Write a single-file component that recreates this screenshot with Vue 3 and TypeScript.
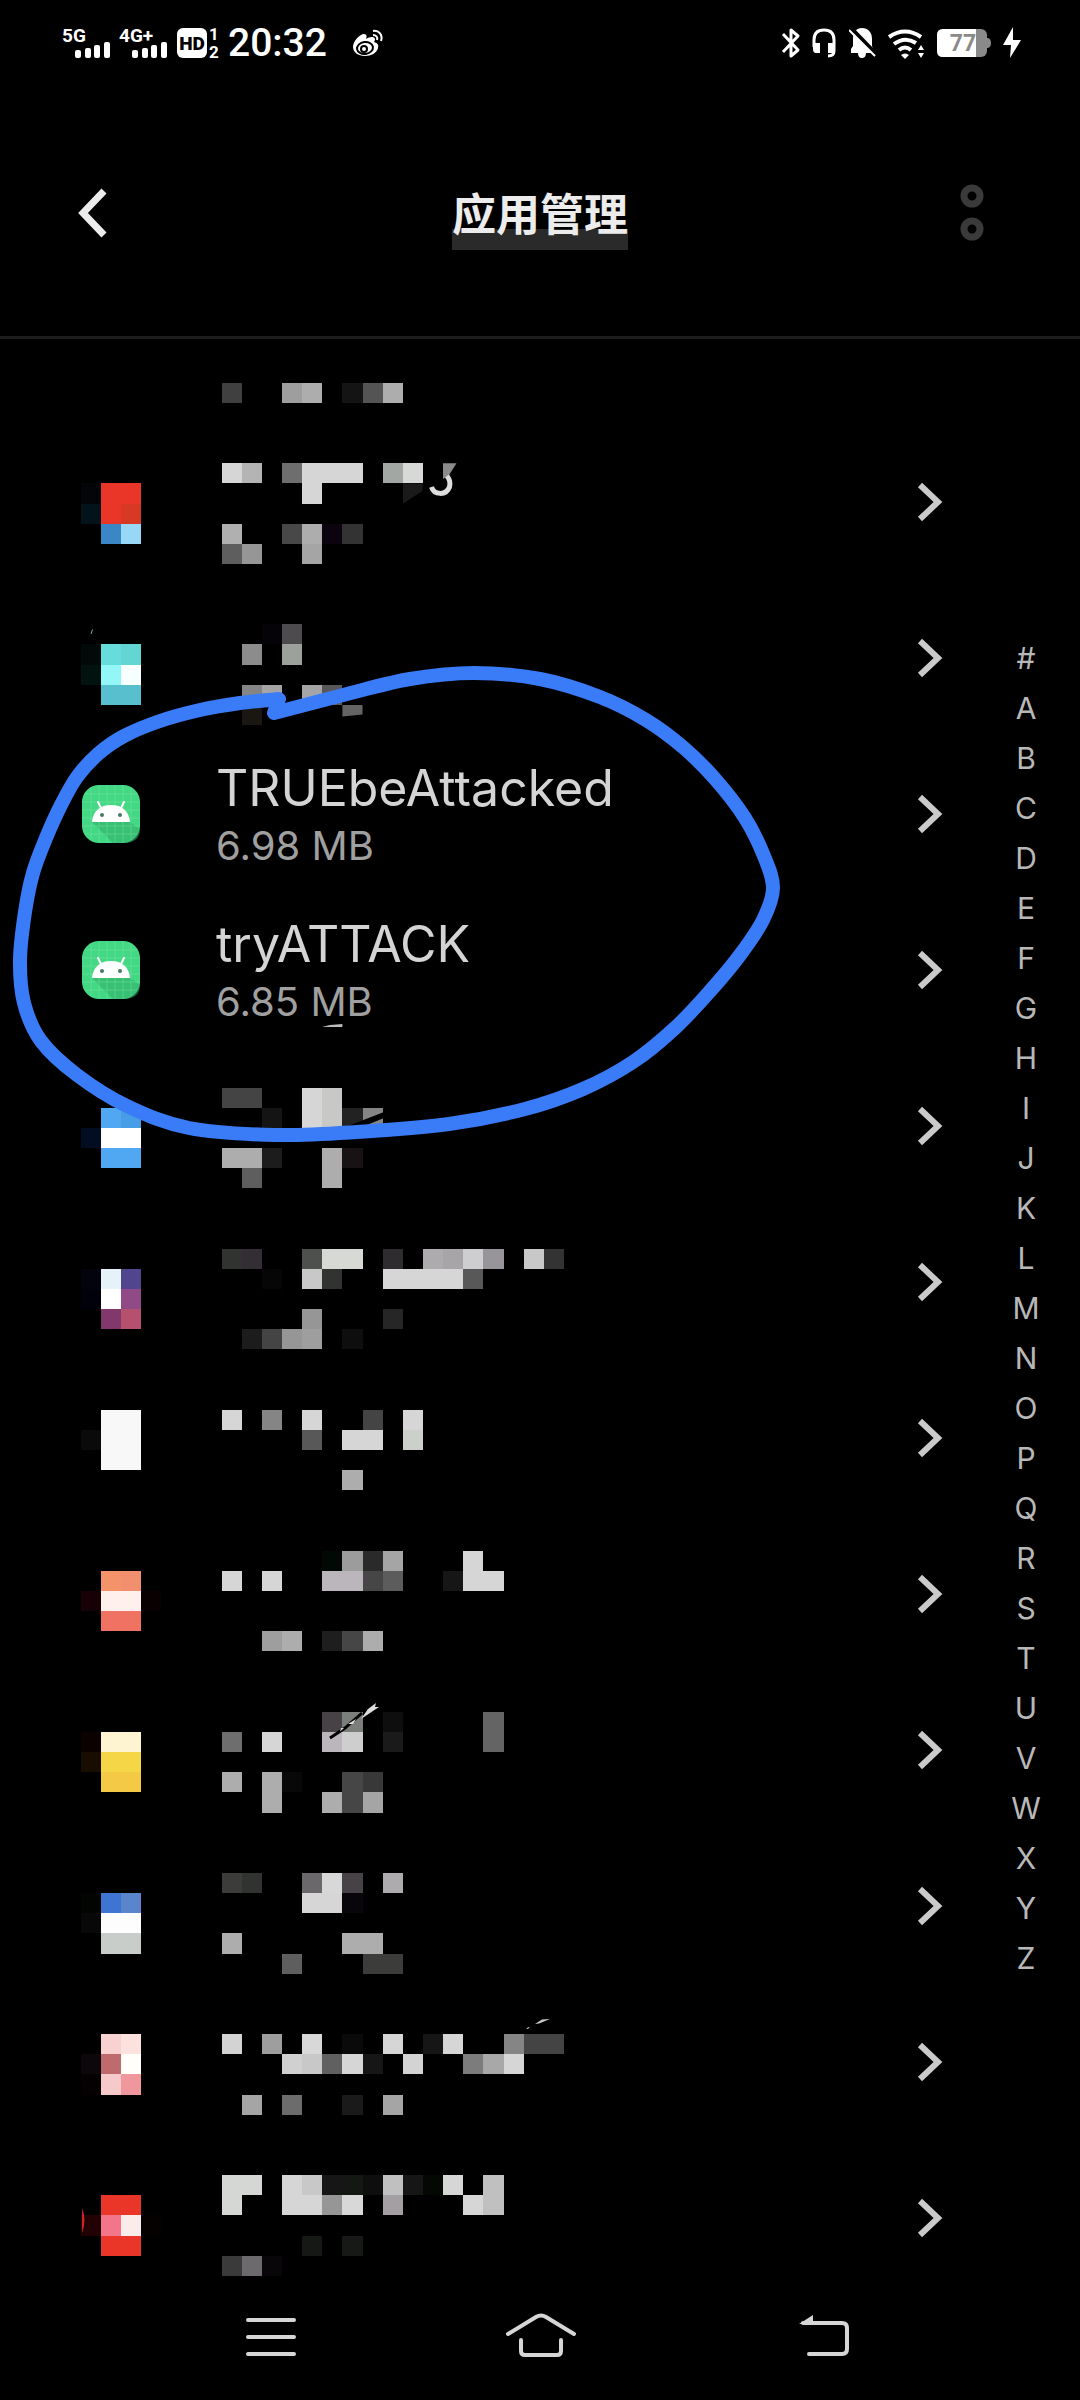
<script setup lang="ts">
type Cell = [row: number, col: number, span: number, color: string]
interface Mark { d: string; fill?: string; stroke?: string; width?: number }
interface AppRow {
  id: number
  name?: string
  size?: string
  cells?: Cell[]
  marks?: Mark[]
}

// Side of one mosaic tile, and the offsets of the list inside the screen
const TILE = 20.14
const LIST_TOP = 339
const PARTIAL = 85
const ROW = 156
const MOSAIC_LEFT = 82

const partialCells: Cell[] = [
  [19, 11, 1, '#404040'], [19, 14, 1, '#9e9e9e'], [19, 15, 1, '#adadad'],
  [19, 17, 1, '#141414'], [19, 18, 1, '#545454'], [19, 19, 1, '#adadad'],
]

const apps: AppRow[] = [
  {
    id: 0,
    cells: [
      [24, 4, 1, '#030508'], [24, 5, 2, '#ea3629'],
      [25, 4, 1, '#04131b'], [25, 5, 1, '#ea3629'], [25, 6, 1, '#d73924'],
      [26, 5, 1, '#3b87c6'], [26, 6, 1, '#98d8f6'],
      [23, 11, 1, '#d6d6d6'], [23, 12, 1, '#b4b4b4'], [23, 14, 1, '#6e6e6e'], [23, 15, 3, '#d6d6d6'],
      [23, 19, 1, '#a3a7a3'], [23, 20, 1, '#d6d9d6'],
      [24, 15, 1, '#d6d6d6'],
      [26, 11, 1, '#b0b0b0'], [26, 14, 1, '#484848'], [26, 15, 1, '#adadad'], [26, 16, 1, '#0b030e'], [26, 17, 1, '#333333'],
      [27, 11, 1, '#5e5e5e'], [27, 12, 1, '#969696'], [27, 15, 1, '#a5a5a5'],
    ],
    marks: [
      { d: 'M403 483.4H422.5V491L403 503.5Z', fill: '#1a1a1a' },
      { d: 'M443 463.3H456.5L448.500 476L443 479Z', fill: '#8a8a8a' },
      { d: 'M431.500 487C434 495 446 496 449.500 487Q451 481 447 476', stroke: '#dddddd', width: 5 },
    ],
  },
  {
    id: 1,
    cells: [
      [31, 13, 1, '#050208'], [31, 14, 1, '#4e4b4e'],
      [32, 4, 1, '#010a08'], [32, 5, 1, '#67dcdc'], [32, 6, 1, '#63d6d4'], [32, 12, 1, '#8c8c8c'], [32, 14, 1, '#9ca19b'],
      [33, 4, 1, '#02120e'], [33, 5, 1, '#93f7f8'], [33, 6, 1, '#f7ffff'],
      [34, 5, 2, '#58bfcf'], [34, 12, 1, '#858585'], [34, 13, 1, '#a5a5a5'], [34, 15, 1, '#a5a5a8'], [34, 16, 1, '#58585a'],
      [35, 12, 1, '#1a1612'],
    ],
    marks: [
      { d: 'M342.4 704.9H362.5V714.500L342.4 716.500Z', fill: '#646464' },
      { d: 'M92.500 629.500L91 634', stroke: '#5fb79c', width: 1 },
    ],
  },
  { id: 2, name: 'TRUEbeAttacked', size: '6.98 MB' },
  { id: 3, name: 'tryATTACK', size: '6.85 MB' },
  {
    id: 4,
    cells: [
      [54, 11, 2, '#444444'], [54, 15, 1, '#d6d6d6'], [54, 16, 1, '#c8c8c6'],
      [55, 5, 1, '#4fa8f1'], [55, 6, 1, '#489ee6'], [55, 13, 1, '#141414'], [55, 15, 1, '#d6d6d6'], [55, 16, 1, '#c8c8c6'],
      [55, 17, 1, '#222222'], [55, 18, 1, '#858585'],
      [56, 4, 1, '#020d22'], [56, 5, 2, '#ffffff'],
      [57, 5, 2, '#4fa8f1'], [57, 11, 2, '#adadad'], [57, 13, 1, '#1c1c1c'], [57, 16, 1, '#adadad'], [57, 17, 1, '#191214'],
      [58, 12, 1, '#5e5e5e'], [58, 16, 1, '#adadad'],
    ],
    marks: [
      { d: 'M322 1027L330 1025L342.400 1024V1027Z', fill: '#bbbbbb' },
      { d: 'M348 1126L366 1119L384 1112V1118L362 1127Z', fill: '#000000' },
    ],
  },
  {
    id: 5,
    cells: [
      [62, 11, 1, '#30332f'], [62, 12, 1, '#322e33'], [62, 15, 1, '#4e504e'], [62, 16, 2, '#d6d9d4'], [62, 19, 1, '#2f2c30'],
      [62, 21, 1, '#adabad'], [62, 22, 1, '#a8a5a8'], [62, 23, 1, '#cecdd0'], [62, 24, 1, '#979599'], [62, 26, 1, '#c8c8c8'], [62, 27, 1, '#333333'],
      [63, 4, 1, '#03030e'], [63, 5, 1, '#e6f2fa'], [63, 6, 1, '#51458f'], [63, 13, 1, '#060606'], [63, 15, 1, '#c8c8c8'], [63, 16, 1, '#303330'],
      [63, 19, 4, '#d6d6d6'], [63, 23, 1, '#585858'],
      [64, 4, 1, '#01010c'], [64, 5, 1, '#ffffff'], [64, 6, 1, '#904b86'],
      [65, 5, 1, '#81386a'], [65, 6, 1, '#b5506f'], [65, 15, 1, '#969696'], [65, 19, 1, '#262626'],
      [66, 12, 1, '#1c1c1c'], [66, 13, 1, '#444444'], [66, 14, 1, '#969696'], [66, 15, 1, '#9e9e9e'], [66, 17, 1, '#0e0e0e'],
    ],
  },
  {
    id: 6,
    cells: [
      [70, 5, 2, '#f8f8f8'], [71, 5, 2, '#f8f8f8'], [72, 5, 2, '#f8f8f8'], [71, 4, 1, '#0a0a0a'],
      [70, 11, 1, '#d6d6d6'], [70, 13, 1, '#858585'], [70, 15, 1, '#d6d6d6'], [70, 18, 1, '#444444'], [70, 20, 1, '#d6d6d6'],
      [71, 15, 1, '#585858'], [71, 17, 2, '#d6d6d6'], [71, 20, 1, '#ccd0ca'],
      [73, 17, 1, '#adadad'],
    ],
  },
  {
    id: 7,
    cells: [
      [77, 16, 1, '#020803'], [77, 17, 1, '#9c9c9c'], [77, 18, 1, '#2a2a2a'], [77, 19, 1, '#a5a5a5'], [77, 23, 1, '#d6d6d6'],
      [78, 5, 1, '#f2936a'], [78, 6, 1, '#f28f6e'], [78, 11, 1, '#d6d6d6'], [78, 13, 1, '#d6d6d6'], [78, 16, 2, '#bbb6bb'],
      [78, 18, 1, '#464646'], [78, 19, 1, '#5c5c5c'], [78, 22, 1, '#161616'], [78, 23, 2, '#d6d6d6'],
      [79, 4, 1, '#180106'], [79, 5, 2, '#ffefed'], [79, 7, 1, '#090101'],
      [80, 5, 2, '#ef7262'],
      [81, 13, 1, '#9e9e9e'], [81, 14, 1, '#adadad'], [81, 16, 1, '#1e1e1e'], [81, 17, 1, '#464646'], [81, 18, 1, '#adadad'],
    ],
  },
  {
    id: 8,
    cells: [
      [85, 16, 1, '#464246'], [85, 17, 1, '#7a7f7a'], [85, 19, 1, '#0e0e0e'], [85, 24, 1, '#646464'],
      [86, 4, 1, '#0b0101'], [86, 5, 2, '#fff4d2'], [86, 11, 1, '#6e6e6e'], [86, 13, 1, '#d6d6d6'], [86, 16, 1, '#bbb6bb'],
      [86, 17, 1, '#cecece'], [86, 19, 1, '#1a1a1a'], [86, 24, 1, '#646464'],
      [87, 4, 1, '#190c01'], [87, 5, 2, '#f5d646'],
      [88, 5, 2, '#f3c946'], [88, 11, 1, '#adadad'], [88, 13, 1, '#adadad'], [88, 14, 1, '#080808'], [88, 17, 1, '#464646'], [88, 18, 1, '#383838'],
      [89, 13, 1, '#adadad'], [89, 16, 1, '#adadad'], [89, 17, 1, '#464646'], [89, 18, 1, '#a5a5a5'],
    ],
    marks: [
      { d: 'M330 1738L345 1728L362 1713', stroke: '#000000', width: 3 },
      { d: 'M340 1731.500L341 1728L344 1728ZM348 1724L356 1719L353 1724ZM361 1719L368 1709L376 1703L375 1707L379 1707L370 1713Z', fill: '#dddddd' },
    ],
  },
  {
    id: 9,
    cells: [
      [93, 11, 1, '#3c3c3a'], [93, 12, 1, '#30332f'], [93, 15, 1, '#6a686a'], [93, 16, 1, '#d8d8d8'], [93, 17, 1, '#464246'], [93, 19, 1, '#adabad'],
      [94, 4, 1, '#010401'], [94, 5, 1, '#3e75d2'], [94, 6, 1, '#5a85cc'], [94, 15, 2, '#d6d6d6'], [94, 17, 1, '#08060a'],
      [95, 4, 1, '#080808'], [95, 5, 2, '#fdfdfd'],
      [96, 5, 2, '#c9cdca'], [96, 11, 1, '#adadad'], [96, 17, 2, '#adadad'],
      [97, 14, 1, '#5e5e5e'], [97, 18, 2, '#3c3c3a'],
    ],
  },
  {
    id: 10,
    cells: [
      [101, 5, 1, '#f8d2d0'], [101, 6, 1, '#fce2df'], [101, 11, 1, '#d3d3d3'], [101, 13, 1, '#9e9e9e'], [101, 15, 1, '#d8d8d8'],
      [101, 17, 1, '#0a0a0a'], [101, 19, 1, '#d6d6d6'], [101, 21, 1, '#161616'], [101, 22, 1, '#d6d6d6'], [101, 25, 1, '#858585'], [101, 26, 2, '#444444'],
      [102, 4, 1, '#0c070a'], [102, 5, 1, '#bf6a6c'], [102, 6, 1, '#fffefb'], [102, 14, 1, '#d0d0d0'], [102, 15, 1, '#c8c8c8'],
      [102, 16, 1, '#606060'], [102, 17, 1, '#d6d6d6'], [102, 18, 1, '#161616'], [102, 20, 1, '#d3d3d3'],
      [102, 23, 1, '#7c7c7c'], [102, 24, 1, '#a8a8a8'], [102, 25, 1, '#d6d6d6'],
      [103, 4, 1, '#050102'], [103, 5, 1, '#f6c9cb'], [103, 6, 1, '#f0979d'],
      [104, 12, 1, '#a5a5a5'], [104, 14, 1, '#6c6c6c'], [104, 17, 1, '#1a1a1a'], [104, 19, 1, '#a5a5a5'],
    ],
    marks: [
      { d: 'M535 2024L542 2019.500L550 2019L539 2023.500ZM526 2028.500L530 2026.500L528 2029Z', fill: '#cccccc' },
    ],
  },
  {
    id: 11,
    cells: [
      [108, 11, 2, '#d4d7d4'], [108, 14, 1, '#d6d6d6'], [108, 15, 1, '#c8c8c8'], [108, 16, 1, '#161616'], [108, 17, 1, '#131813'],
      [108, 18, 1, '#0e0e0e'], [108, 19, 1, '#c0c0c0'], [108, 20, 1, '#161616'], [108, 21, 1, '#030803'], [108, 22, 1, '#d6d6d6'], [108, 24, 1, '#c0c0c0'],
      [109, 5, 2, '#ea3629'], [109, 11, 1, '#d4d7d4'], [109, 14, 2, '#d6d6d6'], [109, 16, 1, '#969696'], [109, 17, 1, '#d8d8d8'],
      [109, 19, 1, '#a39fa3'], [109, 23, 1, '#d6d6d6'], [109, 24, 1, '#c0c0c0'],
      [110, 4, 1, '#210102'], [110, 5, 1, '#f2758a'], [110, 6, 1, '#fbecec'], [110, 7, 1, '#060101'],
      [111, 5, 2, '#ea3629'], [111, 15, 1, '#161816'], [111, 17, 1, '#161916'],
      [112, 11, 1, '#3a3a3a'], [112, 12, 1, '#6c6a6c'], [112, 13, 1, '#080608'],
    ],
    marks: [{ d: 'M82 2208Q87 2220 82 2233Z', fill: '#d0202a' }],
  },
]

const letters: string[] = ['#', ...'ABCDEFGHIJKLMNOPQRSTUVWXYZ']

const rowBox = (id: number): string =>
  `${MOSAIC_LEFT} ${LIST_TOP + PARTIAL + id * ROW} 600 ${ROW}`
const tile = (n: number): number => Math.round(n * TILE)

// Hand-drawn loop: smoothed through its sampled points
const loop: [number, number][] = [
  [279, 699], [240, 703], [200, 710], [160, 721], [124, 736], [98, 754], [77, 777], [61, 805], [46, 838], [33, 873], [25, 912], [20, 960],
  [24, 1003], [41, 1041], [77, 1075], [127, 1106], [189, 1128], [275, 1135], [357, 1132], [449, 1124],
  [525, 1109], [583, 1089], [633, 1062], [675, 1028], [711, 990], [740, 955], [763, 920], [773, 888], [764, 856], [745, 818], [716, 780],
  [684, 748], [646, 720], [600, 697], [540, 679], [474, 673], [410, 679], [347, 694], [274, 713],
]
const loopPath: string = loop.slice(1).reduce((d, p, i) => {
  const a = loop[Math.max(i - 1, 0)], b = loop[i], e = loop[Math.min(i + 2, loop.length - 1)]
  return `${d}C${b[0] + (p[0] - a[0]) / 6} ${b[1] + (p[1] - a[1]) / 6} ${p[0] - (e[0] - b[0]) / 6} ${p[1] - (e[1] - b[1]) / 6} ${p[0]} ${p[1]}`
}, `M${loop[0][0]} ${loop[0][1]}`) + 'Z'
</script>

<template>
  <div class="screen">
    <div class="status">
      <div class="status-left">
        <svg class="signal" width="48" height="32" viewBox="0 0 48 32" fill="#fff">
          <text x="0" y="15" class="net">5G</text>
          <rect x="13" y="23" width="6" height="8" rx="2" /><rect x="23" y="21" width="6" height="10" rx="2" />
          <rect x="32" y="18" width="6" height="13" rx="2" /><rect x="42" y="15" width="6" height="16" rx="2" />
        </svg>
        <svg class="signal" width="48" height="32" viewBox="0 0 48 32" fill="#fff">
          <text x="0" y="15" class="net">4G+</text>
          <rect x="13" y="23" width="6" height="8" rx="2" /><rect x="23" y="21" width="6" height="10" rx="2" />
          <rect x="32" y="18" width="6" height="13" rx="2" /><rect x="42" y="15" width="6" height="16" rx="2" />
        </svg>
        <svg class="signal" width="43" height="32" viewBox="0 0 43 32" fill="#fff">
          <rect x="1" y="1" width="30" height="30" rx="6" />
          <text x="16" y="23" class="hd-text" text-anchor="middle">HD</text>
          <text x="38" y="13" class="sim" text-anchor="middle">1</text>
          <text x="38" y="31" class="sim" text-anchor="middle">2</text>
        </svg>
        <span class="time">20:32</span>
        <svg width="32" height="28" viewBox="0 0 32 28" fill="none">
          <path d="M1 18C1 12 8 5 12 5C15 5 15 8 14 10C17 8 22 7 23 10C23 12 22 13 22 13C25 14 27 15 26 19C25 24 19 27 13 27C6 27 1 23 1 18Z" fill="#fff" />
          <ellipse cx="13" cy="19" rx="8" ry="6" fill="#fff" stroke="#000" stroke-width="2" transform="rotate(-8 13 19)" />
          <circle cx="12" cy="20" r="3" fill="none" stroke="#000" stroke-width="2" />
          <path d="M21 2C27 1 31 6 29 12" stroke="#fff" stroke-width="2" />
          <path d="M21 6C24 6 26 8 25 11" stroke="#fff" stroke-width="2" />
        </svg>
      </div>
      <div class="status-right">
        <svg width="20" height="32" viewBox="0 0 20 32" fill="none" stroke="#fff" stroke-width="3">
          <path d="M2 7L17 23L10 29V3L17 9L2 25" stroke-linejoin="round" />
        </svg>
        <svg width="26" height="32" viewBox="0 0 26 32" fill="none">
          <path d="M2 20V13C2 6 6 3 12 3S22 6 22 13V24Q22 29 16 29" stroke="#fff" stroke-width="3" />
          <path d="M1 16H8V26H4Q1 26 1 22ZM23 16H16V26H23Z" fill="#fff" />
        </svg>
        <svg width="28" height="32" viewBox="0 0 28 32">
          <path d="M2 26V22L4 19V12C4 5 7 1 13 1S23 5 23 12V19L25 24V26H17Q17 31 13 31T9 26Z" fill="#fff" />
          <path d="M2 1L28 28" stroke="#000" stroke-width="4" />
          <path d="M0 3L26 29" stroke="#fff" stroke-width="2" />
        </svg>
        <svg width="38" height="32" viewBox="1 0 38 32" fill="none" stroke="#fff" stroke-width="4">
          <path d="M2 10Q18 -1 34 10M7 17Q18 9 29 16" />
          <path d="M12 23Q18 18 24 23" />
          <path d="M14 28Q18 25 22 28L18 32Z" fill="#fff" stroke="none" />
          <path d="M31 23L34 18L37 23ZM31 26L34 31L37 26Z" fill="#fff" stroke="none" />
        </svg>
        <svg width="54" height="28" viewBox="0 0 54 28">
          <rect width="50" height="28" rx="6" fill="#8a8a8a" />
          <path d="M49 9H51Q54 10 54 14T51 19H49Z" fill="#8a8a8a" />
          <path d="M6 0H39V28H6Q0 28 0 22V6Q0 0 6 0Z" fill="#fff" />
          <text x="26" y="22" class="battery" text-anchor="middle">77</text>
        </svg>
        <svg width="20" height="32" viewBox="0 0 20 32" fill="#fff"><path d="M11 0L1 18H9L8 31L19 13H11Z" /></svg>
      </div>
    </div>

    <header class="header">
      <button aria-label="返回">
        <svg width="34" height="52" viewBox="0 0 34 52" fill="none" stroke="#ececec" stroke-width="7"><path d="M29 4L8 26L29 48" /></svg>
      </button>
      <h1 class="title">应用管理</h1>
      <button class="more" aria-label="更多">
        <svg width="26" height="58" viewBox="0 0 26 58" fill="none" stroke="#3a3a3a" stroke-width="7">
          <circle cx="13" cy="12" r="8" /><circle cx="13" cy="45" r="8" />
        </svg>
      </button>
    </header>

    <main class="body">
      <ul class="list">
        <li class="partial">
          <svg class="mosaic" width="600" :height="PARTIAL" :viewBox="`${MOSAIC_LEFT} ${LIST_TOP} 600 ${PARTIAL}`" aria-hidden="true">
            <rect v-for="(c, i) in partialCells" :key="i" :x="tile(c[1])" :y="tile(c[0])" :width="tile(c[1] + c[2]) - tile(c[1])" :height="tile(c[0] + 1) - tile(c[0])" :fill="c[3]" />
          </svg>
        </li>
        <li v-for="app in apps" :key="app.id">
          <a class="row" href="#" :aria-label="app.name ?? '应用详情'">
            <template v-if="app.name">
              <svg class="app-icon" width="58" height="58" viewBox="0 0 58 58">
                <rect width="58" height="58" rx="17" fill="#43d884" />
                <path d="M10 37L31 58H41Q58 58 58 44L48 37Z" fill="#2fae67" opacity=".55" />
                <path d="M9 3V55M17 0V58M25 0V58M33 0V58M41 0V58M49 3V55M3 9H55M0 17H58M0 25H58M0 33H58M0 41H58M3 49H55" stroke="#8eecb5" stroke-width="1" opacity=".35" />
                <path d="M10 37C11 26 18 20 29 20S47 26 48 37Z" fill="#fff" />
                <path d="M19 23L16 17M39 23L42 17" stroke="#fff" stroke-width="2" stroke-linecap="round" />
                <circle cx="20" cy="30" r="2" fill="#477b62" /><circle cx="38" cy="30" r="2" fill="#477b62" />
              </svg>
              <span class="info">
                <span class="name">{{ app.name }}</span>
                <span class="size">{{ app.size }}</span>
              </span>
            </template>
            <svg v-else class="mosaic" width="600" :height="ROW" :viewBox="rowBox(app.id)" aria-hidden="true">
              <rect v-for="(c, i) in app.cells" :key="i" :x="tile(c[1])" :y="tile(c[0])" :width="tile(c[1] + c[2]) - tile(c[1])" :height="tile(c[0] + 1) - tile(c[0])" :fill="c[3]" />
              <path v-for="(m, i) in app.marks" :key="`m${i}`" :d="m.d" :fill="m.fill ?? 'none'" :stroke="m.stroke" :stroke-width="m.width" />
            </svg>
            <svg class="chevron" width="26" height="42" viewBox="0 0 26 42" fill="none" stroke="#cacaca" stroke-width="6"><path d="M3 4L21 21L3 38" /></svg>
          </a>
        </li>
      </ul>
      <nav class="index">
        <a v-for="l in letters" :key="l" href="#">{{ l }}</a>
      </nav>
      <svg class="loop" width="800" height="520" viewBox="0 640 800 520" aria-hidden="true">
        <path :d="loopPath" fill="none" stroke="#3a7bf7" stroke-width="14" stroke-linejoin="round" />
      </svg>
    </main>

    <footer class="nav">
      <button aria-label="菜单">
        <svg width="100" height="60" viewBox="0 0 100 60" fill="none" stroke="#d6d6d6" stroke-width="4" stroke-linecap="round"><path d="M28 13H74M28 30H74M28 47H74" /></svg>
      </button>
      <button aria-label="主页">
        <svg width="100" height="60" viewBox="0 0 100 60" fill="none" stroke="#d6d6d6" stroke-width="4" stroke-linecap="round">
          <path d="M18 27L46 10Q51 7 56 10L84 27M31 33V44Q31 48 35 48H67Q71 48 71 44V33" />
        </svg>
      </button>
      <button aria-label="后退">
        <svg width="100" height="60" viewBox="0 0 100 60" fill="none" stroke="#d6d6d6" stroke-width="4" stroke-linecap="round">
          <path d="M43 16H82Q87 16 87 21V42Q87 47 82 47H49" /><path d="M39 17L53 8V17Z" fill="#d6d6d6" stroke="none" />
        </svg>
      </button>
    </footer>
  </div>
</template>

<style>
body { background: #000; }
</style>

<style scoped>
.screen {
  display: flex;
  flex-direction: column;
  background: #000;
  color: #d4d4d4;
  font-family: Inter, "Noto Sans CJK SC", sans-serif;
}
svg { display: block; flex: none; }
button { border: 0; padding: 0; background: none; color: inherit; font: inherit; }
a { color: inherit; text-decoration: none; }

.status {
  display: flex;
  justify-content: space-between;
  align-items: center;
  height: 86px;
  padding: 0 58px 0 62px;
  font-family: Roboto, sans-serif;
}
.status-left, .status-right { display: flex; align-items: center; }
.status-left { gap: 9px; }
.status-right { gap: 11px; }
.signal { overflow: visible; }
.net { font-size: 19px; font-weight: 700; }
.hd-text { font-size: 19px; font-weight: 900; fill: #000; }
.sim { font-size: 17px; font-weight: 700; }
.time { margin-right: 16px; color: #fff; font-size: 39px; line-height: 48px; font-weight: 500; }
.battery { font-size: 23px; font-weight: 700; fill: #8a8a8a; }

.header {
  display: grid;
  grid-template-columns: 1fr auto 1fr;
  justify-items: start;
  align-items: center;
  height: 253px;
  box-sizing: border-box;
  padding: 4px 95px 0;
  border-bottom: 3px solid #1c1c1c;
}
.header button:first-child { margin-left: -20px; }
.header .more { justify-self: end; }
.title {
  margin: 0;
  padding-top: 4px;
  background: linear-gradient(#2a2a2a, #2a2a2a) bottom / 100% 21px no-repeat;
  color: #ececec;
  font-size: 44px;
  line-height: 70px;
  font-weight: 700;
}
.body { position: relative; display: flex; align-items: flex-start; }
.list { flex: 1; min-width: 0; margin: 0; padding: 0; list-style: none; }
.partial { height: 85px; padding-left: 82px; }
.row {
  display: flex;
  align-items: center;
  height: 156px;
  padding: 0 29px 0 82px;
}
.mosaic { overflow: visible; }
.chevron { margin-left: auto; }
.info { display: flex; flex-direction: column; gap: 4px; margin-left: 76px; }
.name { font-size: 50px; line-height: 60px; }
.size { color: #a0a0a0; font-size: 40px; line-height: 48px; }
.index {
  display: flex;
  flex-direction: column;
  width: 108px;
  padding-top: 294px;
  color: #b8b8b8;
  font-size: 30px;
  line-height: 50px;
  text-align: center;
}
.loop { position: absolute; left: 0; top: 301px; pointer-events: none; }

.nav {
  display: grid;
  grid-template-columns: repeat(3, 1fr);
  align-items: center;
  justify-items: center;
  height: 104px;
  padding: 0 135px;
}
.nav button { margin-bottom: 22px; }
</style>
